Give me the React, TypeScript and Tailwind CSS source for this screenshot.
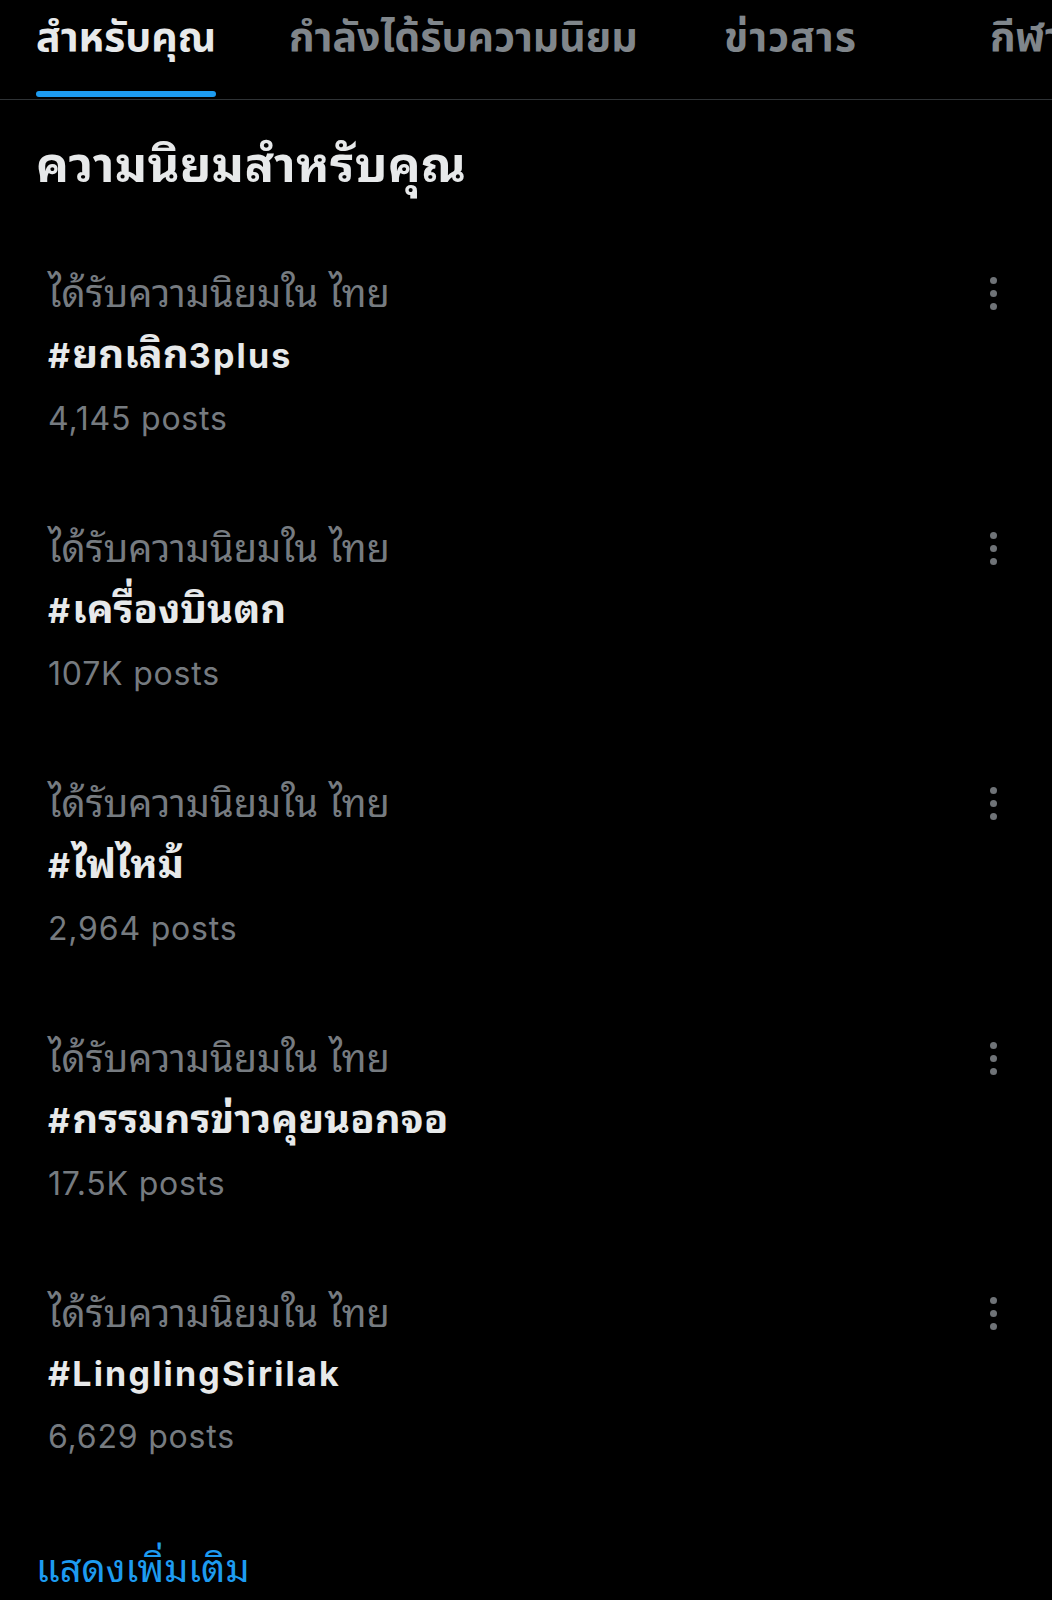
import React from "react";

const items = [
  { tag: "#ยกเลิก3plus", posts: "4,145 posts" },
  { tag: "#เครื่องบินตก", posts: "107K posts" },
  { tag: "#ไฟไหม้", posts: "2,964 posts" },
  { tag: "#กรรมกรข่าวคุยนอกจอ", posts: "17.5K posts" },
  { tag: "#LinglingSirilak", posts: "6,629 posts" },
];

function Tag({ text }: { text: string }) {
  const parts = text.split(/([\u0E00-\u0E7F]+)/).filter((p) => p.length > 0);
  return (
    <span className="text-[34px] font-bold leading-[48px] tracking-[2.2px] text-[#e7e9ea]">
      {parts.map((p, i) =>
        /[\u0E00-\u0E7F]/.test(p) ? (
          <span key={i} className="text-[40px] tracking-normal">
            {p}
          </span>
        ) : (
          <span key={i}>{p}</span>
        )
      )}
    </span>
  );
}

function Dots() {
  return (
    <div className="flex h-[48px] flex-col items-center justify-center gap-[6px]">
      <span className="block h-[7px] w-[7px] rounded-full bg-[#6f7377]" />
      <span className="block h-[7px] w-[7px] rounded-full bg-[#6f7377]" />
      <span className="block h-[7px] w-[7px] rounded-full bg-[#6f7377]" />
    </div>
  );
}

export default function App() {
  return (
    <div className="min-h-[1600px] w-[1052px] overflow-hidden bg-black font-['Inter','Noto_Sans_Thai_Looped',sans-serif] text-[#e7e9ea]">
      <div className="flex h-[100px] whitespace-nowrap border-b border-[#2f3336] font-['Inter','Noto_Sans_Thai',sans-serif]">
        <div className="ml-[36px] flex w-[253px] shrink-0 flex-col">
          <div className="inline-flex flex-col self-start">
            <span className="pt-[14px] text-[41px] font-bold leading-[44px] text-[#e7e9ea]">สำหรับคุณ</span>
            <span className="mt-[33px] block h-[6px] rounded-full bg-[#1d9bf0]" />
          </div>
        </div>
        <div className="w-[435px] shrink-0 pt-[14px] text-[41px] font-bold leading-[44px] text-[#80868b]">กำลังได้รับความนิยม</div>
        <div className="w-[266px] shrink-0 pt-[14px] text-[41px] font-bold leading-[44px] tracking-[1px] text-[#80868b]">ข่าวสาร</div>
        <div className="shrink-0 pt-[14px] text-[41px] font-bold leading-[44px] text-[#80868b]">กีฬา</div>
      </div>

      <div className="px-[36px] pb-[76px] pt-[37px]">
        <h2 className="text-[49px] font-bold leading-[56px] tracking-[0.3px] text-[#e7e9ea]">ความนิยมสำหรับคุณ</h2>
      </div>

      <div>
        {items.map((it) => (
          <div key={it.tag} className="flex h-[255px] items-start justify-between pl-[48px] pr-[55px]">
            <div className="flex flex-col">
              <span className="text-[38px] leading-[48px] text-[#767b80]">ได้รับความนิยมใน ไทย</span>
              <span className="mt-[13px] leading-[48px]">
                <Tag text={it.tag} />
              </span>
              <span className="mt-[9px] text-[32px] leading-[48px] tracking-[0.8px] text-[#767b80]">{it.posts}</span>
            </div>
            <Dots />
          </div>
        ))}
      </div>

      <div className="px-[36px]">
        <span className="text-[38px] leading-[48px] text-[#1d9bf0]">แสดงเพิ่มเติม</span>
      </div>
    </div>
  );
}
